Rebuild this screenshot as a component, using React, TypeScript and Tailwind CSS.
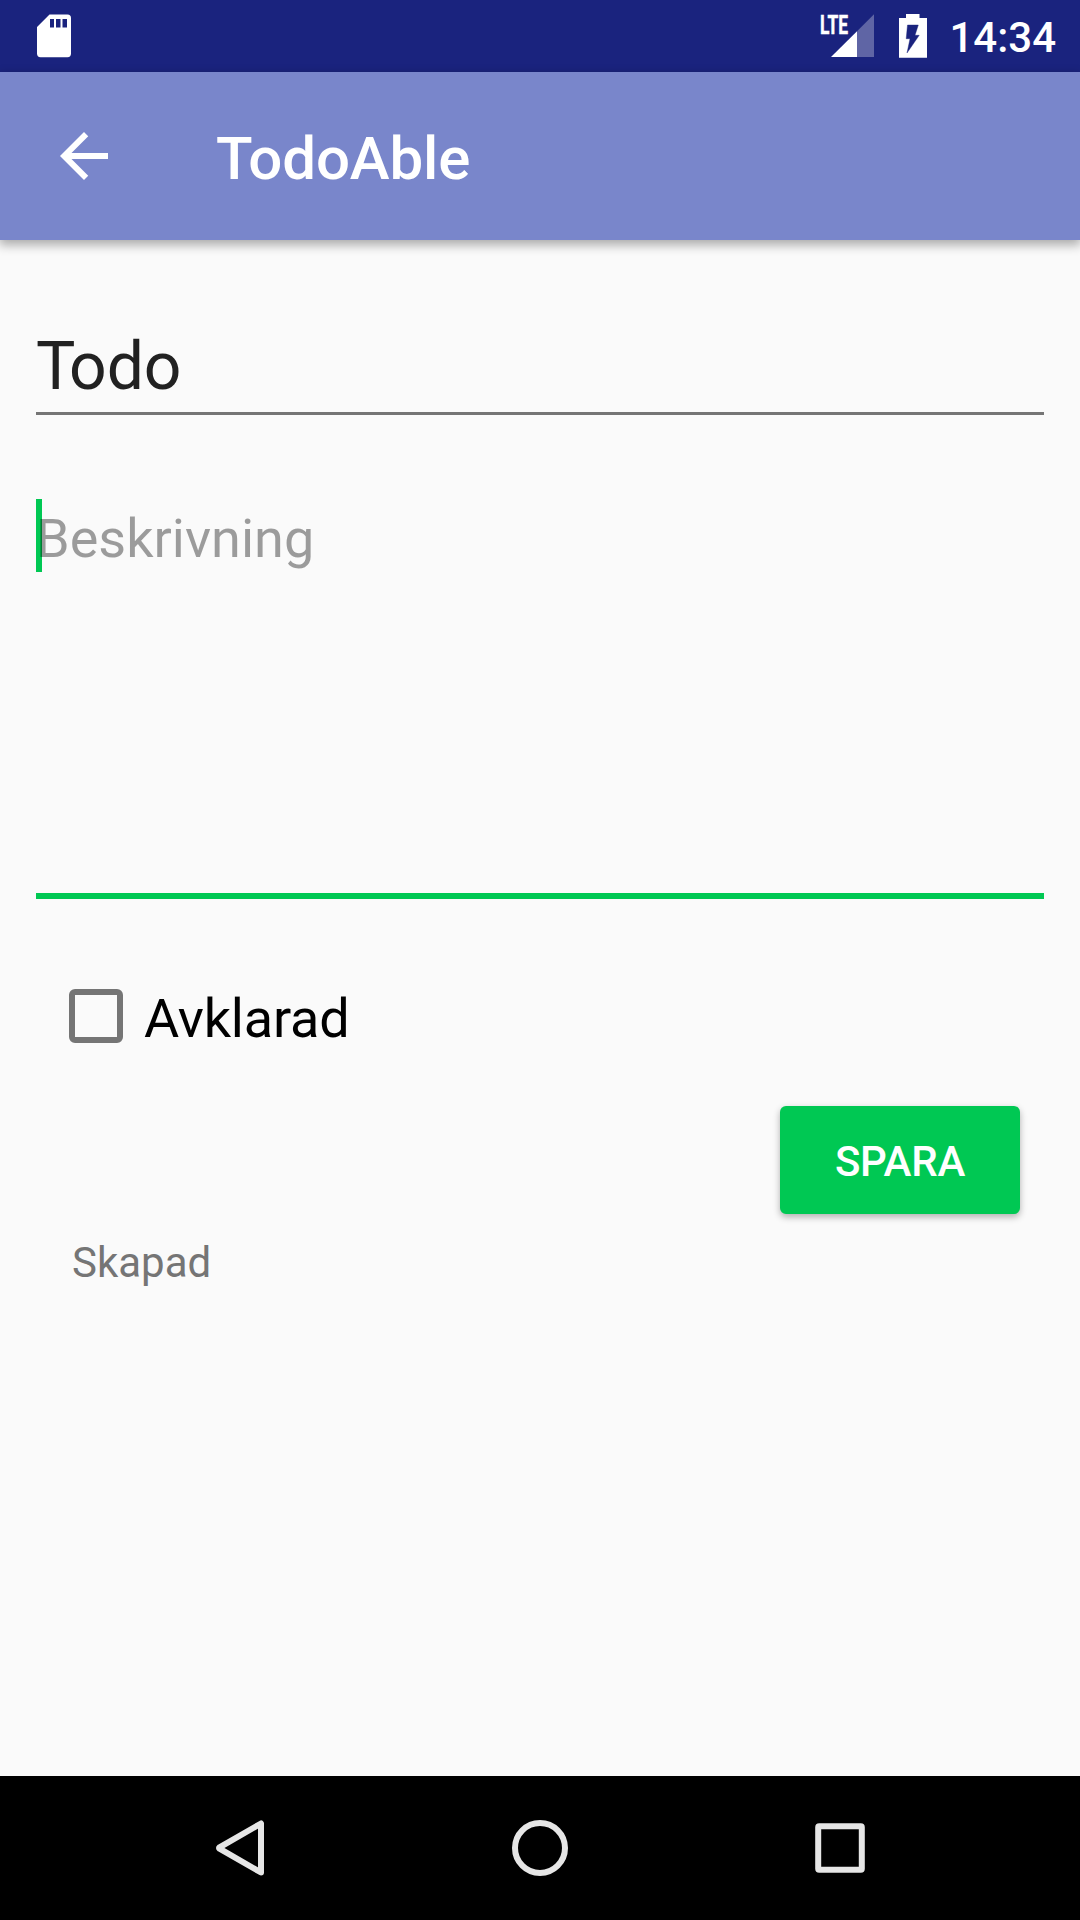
function SdCardIcon() {
  return (
    <svg width="72" height="72" viewBox="0 0 72 72" className="shrink-0">
      <path
        fill="#fff"
        fillRule="evenodd"
        d="M49.5 14.5H67.5Q71 14.5 71 18V53.500Q71 57.200 67.500 57.200H40.500Q37 57.200 37 53.500V27Z M50 19V27.500H54V19Z M56 19V27.500H60.500V19Z M62.500 19V27.500H67V19Z"
      />
    </svg>
  );
}

function SignalIcon() {
  return (
    <svg width="60" height="72" viewBox="818 0 60 72" className="shrink-0">
      <path fill="#fff" fillOpacity="0.3" d="M857 31.300L874 14.300V57H857Z" />
      <path fill="#fff" d="M831 57L857 31.300V57Z" />
      <text
        x="820"
        y="33.500"
        fill="#fff"
        stroke="#fff"
        strokeWidth="0.500"
        fontFamily="Roboto, sans-serif"
        fontWeight="700"
        fontSize="26"
        textLength="28"
        lengthAdjust="spacingAndGlyphs"
      >
        LTE
      </text>
    </svg>
  );
}

function BatteryIcon() {
  return (
    <svg width="50" height="72" viewBox="888 0 50 72" className="shrink-0">
      <path fill="#fff" d="M906 14H919.500V18H927V57.700H899V18H906Z" />
      <path
        fill="#1a237e"
        stroke="#1a237e"
        strokeOpacity="0.400"
        strokeWidth="1"
        d="M907.500 25H918.300L915 35.300H919.200L907 53L910 38.700H906.200Z"
      />
    </svg>
  );
}

function StatusBar() {
  return (
    <div className="flex h-[72px] items-center justify-between bg-[#1a237e]">
      <SdCardIcon />
      <div className="flex items-center pr-6">
        <SignalIcon />
        <div className="w-2.5" />
        <BatteryIcon />
        <span className="ml-[11px] h-[72px] pt-[3px] text-[42px] leading-[69px] font-medium">14:34</span>
      </div>
    </div>
  );
}

function AppBar() {
  return (
    <header className="relative flex h-[168px] items-center bg-[#7986cb] shadow-[0_4px_10px_1px_rgba(0,0,0,0.32)]">
      <svg width="72" height="72" viewBox="0 0 24 24" className="ml-12 shrink-0">
        <path fill="#fff" d="M20 11H7.830l5.590-5.590L12 4l-8 8 8 8 1.410-1.410L7.830 13H20v-2z" />
      </svg>
      <h1 className="ml-24 pt-[5px] text-[60px] leading-[80px] font-medium tracking-[-0.15px]">TodoAble</h1>
    </header>
  );
}

function Form() {
  return (
    <main className="flex flex-1 flex-col bg-[#fafafa] px-9 pt-[86px]">
      <div className="h-[89px] border-b-[3px] border-[#757575] text-[66px] leading-[82px] text-[#212121] first-letter:tracking-[-6.4px]">
        Todo
      </div>
      <div className="mt-[84px] flex h-[400px] items-start border-b-[6px] border-[#00c853]">
        <div className="h-[73px] w-1.5 bg-[#00c853]" />
        <div className="relative -ml-1.5 pt-[3px] text-[54px] leading-[73px] text-black/38">Beskrivning</div>
      </div>
      <label className="mt-[90px] ml-[33px] flex h-[54px] items-center">
        <span className="size-[54px] rounded-[6px] border-6 border-[#757575]" />
        <span className="ml-[21px] pt-[5px] text-[54px] leading-[73px] tracking-[-0.2px] text-black">Avklarad</span>
      </label>
      <button className="mt-[63px] mr-6 h-[108px] w-60 self-end rounded-[6px] bg-[#00c853] pt-[3px] text-[42px] font-medium tracking-[-0.2px] shadow-[0_3px_7px_rgba(0,0,0,0.3)]">
        SPARA
      </button>
      <div className="mt-6 ml-9 text-[42px] leading-[50px] text-[#757575]">Skapad</div>
    </main>
  );
}

function NavBar() {
  return (
    <nav className="grid h-36 grid-cols-3 place-items-center bg-black px-[90px]">
      <svg width="72" height="72" viewBox="0 0 72 72" fill="none" stroke="#e6e6e6" strokeWidth="6" strokeLinejoin="round">
        <path d="M57 11.500V60.500L15.500 36.700Q14.500 36 15.500 35.300Z" />
      </svg>
      <svg width="72" height="72" viewBox="0 0 72 72" fill="none" stroke="#e6e6e6" strokeWidth="6">
        <circle cx="36" cy="36" r="25" />
      </svg>
      <svg width="72" height="72" viewBox="0 0 72 72" fill="none" stroke="#e6e6e6" strokeWidth="6" strokeLinejoin="round">
        <rect x="14.200" y="14.200" width="43.600" height="43.600" rx="1" />
      </svg>
    </nav>
  );
}

export default function App() {
  return (
    <div className="flex h-[1920px] w-[1080px] flex-col overflow-hidden font-['Roboto',sans-serif] text-white">
      <StatusBar />
      <AppBar />
      <Form />
      <NavBar />
    </div>
  );
}
